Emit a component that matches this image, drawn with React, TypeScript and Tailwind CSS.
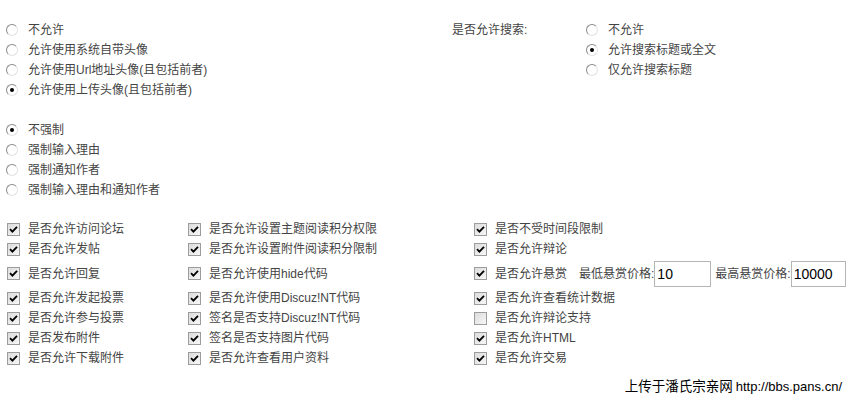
import React from "react";

function Radio({ checked, label }: { checked?: boolean; label: string }) {
  return (
    <div className="flex items-center h-5 gap-[10px]">
      <span className="relative w-3 h-3 rounded-full border border-t-[#8a8a8a] border-l-[#8a8a8a] border-r-[#e2e2e2] border-b-[#e2e2e2] bg-white">
        {checked && (
          <span className="absolute left-1/2 top-1/2 w-1 h-1 -translate-x-1/2 -translate-y-1/2 rounded-full bg-black" />
        )}
      </span>
      <span>{label}</span>
    </div>
  );
}

function Check({ checked = true }: { checked?: boolean }) {
  return (
    <span className="flex items-center justify-center w-[13px] h-[13px] border border-[#9c9c9c] bg-gradient-to-br from-[#dcdcdc] to-[#f7f7f7]">
      {checked && (
        <svg width="9" height="9" viewBox="0 0 9 9">
          <path d="M1 4.2 L3.4 6.6 L8 1.8" fill="none" stroke="#000" strokeWidth="1.8" />
        </svg>
      )}
    </span>
  );
}

function Item({ label, checked = true, children }: { label: string; checked?: boolean; children?: React.ReactNode }) {
  return (
    <div className="flex items-center gap-2 pl-[7px]">
      <Check checked={checked} />
      <span>{label}</span>
      {children}
    </div>
  );
}

const rows: [string, string, string, boolean?][] = [
  ["是否允许访问论坛", "是否允许设置主题阅读积分权限", "是否不受时间段限制"],
  ["是否允许发帖", "是否允许设置附件阅读积分限制", "是否允许辩论"],
  ["是否允许回复", "是否允许使用hide代码", "是否允许悬赏"],
  ["是否允许发起投票", "是否允许使用Discuz!NT代码", "是否允许查看统计数据"],
  ["是否允许参与投票", "签名是否支持Discuz!NT代码", "是否允许辩论支持", false],
  ["是否发布附件", "签名是否支持图片代码", "是否允许HTML"],
  ["是否允许下载附件", "是否允许查看用户资料", "是否允许交易"],
];

export default function App() {
  return (
    <div className="w-[851px] h-[398px] bg-white text-[12px] leading-5 text-[#444] font-['Liberation_Sans','Noto_Sans_CJK_SC',sans-serif] overflow-hidden">
      <div className="flex pt-5">
        <div className="w-[452px] pl-[6px]">
          <Radio label="不允许" />
          <Radio label="允许使用系统自带头像" />
          <Radio label="允许使用Url地址头像(且包括前者)" />
          <Radio checked label="允许使用上传头像(且包括前者)" />
        </div>
        <div className="w-[134px] h-5 flex items-center">是否允许搜索:</div>
        <div>
          <Radio label="不允许" />
          <Radio checked label="允许搜索标题或全文" />
          <Radio label="仅允许搜索标题" />
        </div>
      </div>

      <div className="pt-5 pl-[6px]">
        <Radio checked label="不强制" />
        <Radio label="强制输入理由" />
        <Radio label="强制通知作者" />
        <Radio label="强制输入理由和通知作者" />
      </div>

      <div className="mt-[19px] grid grid-cols-[181px_286px_1fr]">
        {rows.map(([a, b, c, cChecked], i) => (
          <div key={i} className="contents">
            <div className={i === 2 ? "h-[29px] flex items-center" : "h-5 flex items-center"}>
              <Item label={a} />
            </div>
            <div className={i === 2 ? "h-[29px] flex items-center" : "h-5 flex items-center"}>
              <Item label={b} />
            </div>
            <div className={i === 2 ? "h-[29px] flex items-center" : "h-5 flex items-center"}>
              {i === 2 ? (
                <Item label={c}>
                  <span className="ml-[4px] flex items-center">
                    最低悬赏价格:
                    <input
                      defaultValue="10"
                      className="w-[57px] h-[26px] border border-[#b5b5b5] px-[2px] text-[14px] text-black outline-none"
                    />
                  </span>
                  <span className="flex items-center ml-[-4px]">
                    最高悬赏价格:
                    <input
                      defaultValue="10000"
                      className="w-[55px] h-[26px] border border-[#b5b5b5] px-[2px] text-[14px] text-black outline-none"
                    />
                  </span>
                </Item>
              ) : (
                <Item label={c} checked={cChecked !== false} />
              )}
            </div>
          </div>
        ))}
      </div>

      <div className="mt-[9px] pr-[9px] flex justify-end items-center text-black">
        <span className="text-[13.5px]">上传于潘氏宗亲网</span>
        <span className="text-[13px] ml-[3px]">http://bbs.pans.cn/</span>
      </div>
    </div>
  );
}
